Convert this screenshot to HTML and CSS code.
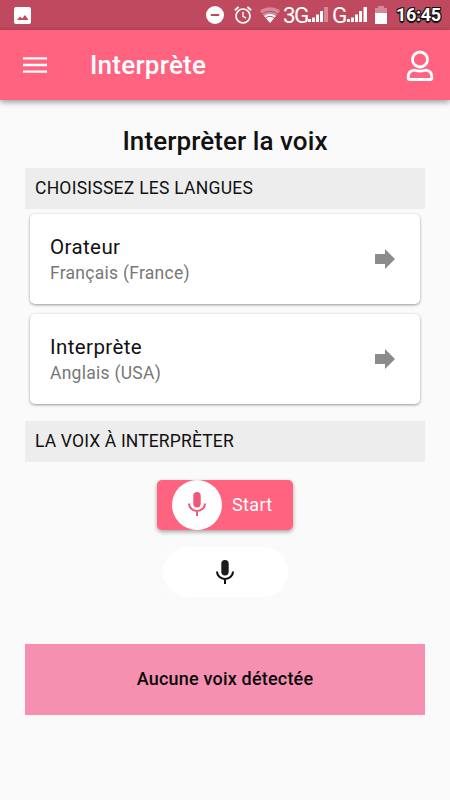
FILE: index.html
```html
<!DOCTYPE html>
<html lang="fr">
<head>
    <meta charset="UTF-8">
    <meta name="viewport" content="width=device-width, initial-scale=1.0">
    <title>Interprète</title>
    <link rel="stylesheet" href="styles.css">
</head>
<body>
    <div class="status-bar">
        <svg class="icon-image" width="17" height="17" viewBox="0 0 17 17">
            <rect width="17" height="17" rx="2" fill="#fff"/>
            <path d="M3 13l3-3.500 2.200 2L11 8l3.500 5z" fill="#bf4a5f"/>
        </svg>
        <div class="status-icons">
            <svg class="icon-dnd" width="18" height="18" viewBox="0 0 18 18">
                <circle cx="9" cy="9" r="9" fill="#fff"/>
                <path d="M4.800 9h8.400" stroke="#bf4a5f" stroke-width="2"/>
            </svg>
            <svg class="icon-alarm" width="18" height="18" viewBox="0 0 18 18" fill="none" stroke="#fff">
                <circle cx="9" cy="10" r="7" stroke-width="1.700"/>
                <path d="M9 5.800v4.500l3 1.800" stroke-width="1.300"/>
                <path d="M.8 4.200L4.600 1M17.200 4.200L13.400 1" stroke-width="1.800"/>
            </svg>
            <svg class="icon-wifi" width="20" height="16" viewBox="0 0 20 16">
                <path d="M10 16L0 4a15.500 15.500 0 0 1 20 0z" fill="#fff" opacity=".35"/>
                <path d="M10 16L4.200 9a9.500 9.500 0 0 1 11.600 0z" fill="#fff"/>
                <path d="M2.200 6.900a13 13 0 0 1 15.600 0M5.500 11a7.500 7.500 0 0 1 9 0" fill="none" stroke="#bf4a5f" stroke-width="1"/>
            </svg>
            <span class="network network-3g">3G</span>
            <svg class="icon-signal" width="20" height="15" viewBox="0 0 20 15" fill="#fff">
                <path d="M0 12h3v3H0zM4 10.500h3V15H4zM8 7.500h3V15H8zM12 4h3v11h-3z"/>
                <path d="M16 0h4v15h-4z" opacity=".35"/>
            </svg>
            <span class="network network-g">G</span>
            <svg class="icon-signal" width="20" height="15" viewBox="0 0 20 15" fill="#fff">
                <path d="M0 12h3v3H0zM4 10.500h3V15H4zM8 7.500h3V15H8zM12 4h3v11h-3zM16.500 0H20v15h-3.500z"/>
            </svg>
            <svg class="icon-battery" width="12" height="18" viewBox="0 0 12 18" fill="#fff">
                <path d="M3 0h6v2h3v5H0V2h3z" opacity=".35"/>
                <path d="M0 7h12v11H0z"/>
            </svg>
            <span class="clock">16:45</span>
        </div>
    </div>

    <header class="toolbar">
        <svg class="icon-menu" width="24" height="16" viewBox="0 0 24 16">
            <path d="M0 1.400h24M0 8h24M0 14.600h24" stroke="#fff" stroke-width="2.300"/>
        </svg>
        <span class="toolbar-title">Interprète</span>
        <svg class="icon-user" width="28" height="32" viewBox="0 0 28 32" fill="none" stroke="#fff" stroke-width="2.800">
            <circle cx="14" cy="9.500" r="7.500"/>
            <path d="M8.800 20.200C4.500 20.500 2.200 23 2.200 26.500V28q0 1.500 1.500 1.500h20.600q1.500 0 1.500-1.500v-1.500c0-3.500-2.300-6-6.600-6.300q-5.200 1.800-10.400 0z" stroke-linejoin="round"/>
        </svg>
    </header>

    <main class="content">
        <h1>Interprèter la voix</h1>

        <h2 class="section-title section-langues">CHOISISSEZ LES LANGUES</h2>
        <div class="cards">
            <div class="card">
                <div class="card-text">
                    <div class="card-title">Orateur</div>
                    <div class="card-subtitle">Français (France)</div>
                </div>
                <svg width="20" height="20" viewBox="0 0 20 20">
                    <path d="M0 5h10V0l10 10-10 10v-5H0z" fill="#8b8b8b"/>
                </svg>
            </div>
            <div class="card">
                <div class="card-text">
                    <div class="card-title">Interprète</div>
                    <div class="card-subtitle">Anglais (USA)</div>
                </div>
                <svg width="20" height="20" viewBox="0 0 20 20">
                    <path d="M0 5h10V0l10 10-10 10v-5H0z" fill="#8b8b8b"/>
                </svg>
            </div>
        </div>

        <h2 class="section-title section-voix">LA VOIX À INTERPRÈTER</h2>
        <div class="actions">
            <button class="btn-start">
                <span class="btn-circle">
                    <svg width="18" height="25" viewBox="0 0 18 25">
                        <rect x="5.300" y="0" width="7.400" height="15.500" rx="3.700" fill="#f0557a"/>
                        <path d="M1 11.500a8 7.500 0 0 0 16 0M9 19v5" fill="none" stroke="#f0557a" stroke-width="2"/>
                    </svg>
                </span>
                <span class="btn-label">Start</span>
            </button>
            <button class="btn-mic">
                <svg width="18" height="25" viewBox="0 0 18 25">
                    <rect x="5.300" y="0" width="7.400" height="15.500" rx="3.700" fill="#1c1c1c"/>
                    <path d="M1 11.500a8 7.500 0 0 0 16 0M9 19v5" fill="none" stroke="#0c0c0c" stroke-width="2"/>
                </svg>
            </button>
        </div>

        <div class="message"><span>Aucune voix détectée</span></div>
    </main>
</body>
</html>
```

FILE: styles.css
```css
* {
    box-sizing: border-box;
}

body {
    margin: 0;
    min-height: 100vh;
    background-color: #fafafa;
    font-family: Roboto, "Liberation Sans", sans-serif;
    color: #111;
}

svg {
    display: block;
    flex-shrink: 0;
}

/* Barre d'état */
.status-bar {
    display: flex;
    justify-content: space-between;
    align-items: center;
    height: 30px;
    padding: 0 10px 0 14px;
    background-color: #bf4a5f;
    color: #fff;
}

.status-icons {
    display: flex;
    align-items: center;
    height: 30px;
}

.icon-alarm {
    margin-left: 10px;
}

.icon-wifi {
    margin-left: 8px;
}

.icon-signal {
    margin-top: -2px;
}

.network {
    font-size: 22.5px;
    font-weight: 400;
    line-height: 33px;
    white-space: nowrap;
}

.network-3g {
    width: 25px;
    margin-left: 3px;
    letter-spacing: -1.6px;
}

.network-g {
    width: 15px;
    margin-left: 4px;
}

.icon-battery {
    margin-left: 8px;
}

.clock {
    width: 44px;
    margin-left: 9px;
    font-size: 18px;
    font-weight: 700;
    letter-spacing: -0.3px;
    line-height: 32px;
    white-space: nowrap;
    text-shadow: -1px -1px 0 #111, 1px -1px 0 #111, -1px 1px 0 #111, 1px 1px 0 #111, 0 2px 1px #111;
}

/* Barre d'outils */
.toolbar {
    display: flex;
    align-items: center;
    height: 70px;
    padding: 0 16px 0 23px;
    background-color: #ff637f;
    box-shadow: 0 2px 6px rgba(0, 0, 0, 0.4);
    color: #fff;
}

.toolbar-title {
    flex: 1;
    margin-left: 43px;
    font-size: 26px;
    font-weight: 500;
    letter-spacing: 0.25px;
}

.icon-user {
    margin-top: 2px;
}

/* Contenu */
.content {
    padding: 25px 25px 0;
}

h1 {
    margin: 0;
    font-size: 26px;
    font-weight: 500;
    letter-spacing: 0.08px;
    line-height: 32px;
    text-align: center;
    white-space: nowrap;
}

.section-title {
    height: 41px;
    margin: 0;
    padding-left: 10px;
    background-color: #ededed;
    font-size: 17.5px;
    font-weight: 400;
    letter-spacing: 0.25px;
    line-height: 41px;
    white-space: nowrap;
}

.section-langues {
    margin-top: 11px;
}

.section-voix {
    letter-spacing: 0.15px;
}

.cards {
    display: flex;
    flex-direction: column;
    gap: 10px;
    padding: 5px 5px 17px;
}

.card {
    display: flex;
    justify-content: space-between;
    align-items: center;
    height: 90px;
    padding: 0 25px 0 20px;
    border-radius: 5px;
    background-color: #fff;
    box-shadow: 0 1px 3px rgba(0, 0, 0, 0.4);
}

.card-text {
    padding-top: 2px;
}

.card-title {
    font-size: 20.5px;
    letter-spacing: 0.4px;
    line-height: 26px;
}

.card-subtitle {
    color: #777;
    font-size: 17.5px;
    letter-spacing: 0.27px;
    line-height: 26px;
}

.actions {
    display: flex;
    flex-direction: column;
    align-items: center;
    gap: 17px;
    padding-top: 18px;
}

button {
    padding: 0;
    border: none;
    font-family: inherit;
}

.btn-start {
    display: flex;
    align-items: center;
    width: 136px;
    height: 50px;
    padding-left: 15px;
    border-radius: 5px;
    background-color: #ff637f;
    box-shadow: 0 2px 4px rgba(0, 0, 0, 0.35);
    color: #fff;
}

.btn-circle {
    display: flex;
    justify-content: center;
    align-items: center;
    width: 50px;
    height: 50px;
    border-radius: 50%;
    background-color: #fff;
}

.btn-circle svg {
    margin-top: -1px;
}

.btn-label {
    margin: 0 0 2px 10px;
    font-size: 18px;
    letter-spacing: 0.35px;
}

.btn-mic {
    display: flex;
    justify-content: center;
    align-items: center;
    width: 125px;
    height: 50px;
    border-radius: 25px;
    background-color: #fff;
}

.message {
    height: 71px;
    margin-top: 47px;
    background-color: #f590b1;
    color: #0a0a0a;
    font-size: 18px;
    font-weight: 500;
    letter-spacing: 0.2px;
    line-height: 70px;
    text-align: center;
}
```
